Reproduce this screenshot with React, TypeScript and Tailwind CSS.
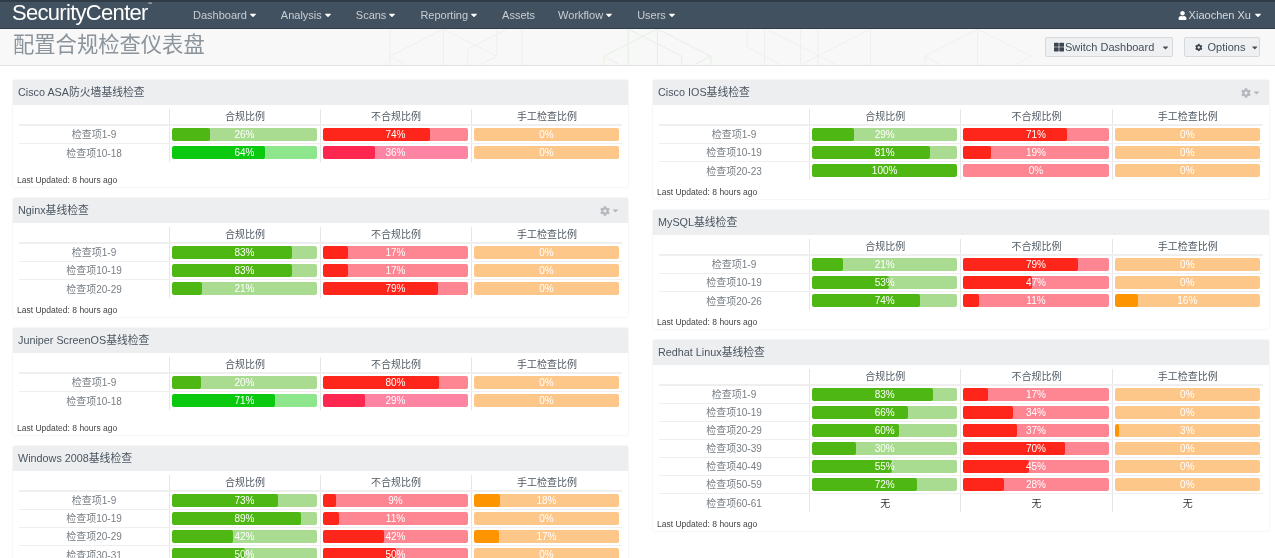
import { FaCaretDown, FaCog, FaThLarge, FaUser } from "react-icons/fa";

type Row = { label: string; values: [number, number, number] | null; alt?: boolean };

interface PanelData {
  title: string;
  gear?: boolean;
  rows: Row[];
}

const leftPanels: PanelData[] = [
  {
    title: "Cisco ASA防火墙基线检查",
    rows: [
      { label: "检查项1-9", values: [26, 74, 0] },
      { label: "检查项10-18", values: [64, 36, 0], alt: true },
    ],
  },
  {
    title: "Nginx基线检查",
    gear: true,
    rows: [
      { label: "检查项1-9", values: [83, 17, 0] },
      { label: "检查项10-19", values: [83, 17, 0] },
      { label: "检查项20-29", values: [21, 79, 0] },
    ],
  },
  {
    title: "Juniper ScreenOS基线检查",
    rows: [
      { label: "检查项1-9", values: [20, 80, 0] },
      { label: "检查项10-18", values: [71, 29, 0], alt: true },
    ],
  },
  {
    title: "Windows 2008基线检查",
    rows: [
      { label: "检查项1-9", values: [73, 9, 18] },
      { label: "检查项10-19", values: [89, 11, 0] },
      { label: "检查项20-29", values: [42, 42, 17] },
      { label: "检查项30-31", values: [50, 50, 0] },
    ],
  },
];

const rightPanels: PanelData[] = [
  {
    title: "Cisco IOS基线检查",
    gear: true,
    rows: [
      { label: "检查项1-9", values: [29, 71, 0] },
      { label: "检查项10-19", values: [81, 19, 0] },
      { label: "检查项20-23", values: [100, 0, 0] },
    ],
  },
  {
    title: "MySQL基线检查",
    rows: [
      { label: "检查项1-9", values: [21, 79, 0] },
      { label: "检查项10-19", values: [53, 47, 0] },
      { label: "检查项20-26", values: [74, 11, 16] },
    ],
  },
  {
    title: "Redhat Linux基线检查",
    rows: [
      { label: "检查项1-9", values: [83, 17, 0] },
      { label: "检查项10-19", values: [66, 34, 0] },
      { label: "检查项20-29", values: [60, 37, 3] },
      { label: "检查项30-39", values: [30, 70, 0] },
      { label: "检查项40-49", values: [55, 45, 0] },
      { label: "检查项50-59", values: [72, 28, 0] },
      { label: "检查项60-61", values: null },
    ],
  },
];

const navItems = [
  { label: "Dashboard", caret: true },
  { label: "Analysis", caret: true },
  { label: "Scans", caret: true },
  { label: "Reporting", caret: true },
  { label: "Assets", caret: false },
  { label: "Workflow", caret: true },
  { label: "Users", caret: true },
];

const barColors = {
  green: { track: "bg-[#a9dc90]", fill: "bg-[#4fb713]" },
  brightGreen: { track: "bg-[#8de68c]", fill: "bg-[#0ac90f]" },
  red: { track: "bg-[#fe8692]", fill: "bg-[#fe251b]" },
  pink: { track: "bg-[#fd85a3]", fill: "bg-[#fd2750]" },
  orange: { track: "bg-[#fec78a]", fill: "bg-[#fe9500]" },
};

function Bar({ value, color }: { value: number; color: keyof typeof barColors }) {
  const c = barColors[color];
  return (
    <div className={`relative h-[13px] rounded-[2px] overflow-hidden ${c.track}`}>
      <div className={`h-full rounded-[2px] ${c.fill}`} style={{ width: `${value}%` }} />
      <div className="absolute inset-0 flex items-center justify-center text-[10px] leading-none text-white">
        {value}%
      </div>
    </div>
  );
}

function Panel({ panel }: { panel: PanelData }) {
  return (
    <div className="flex flex-col min-h-[107px] bg-white rounded-[2px] shadow-[0_0_2px_rgba(0,0,0,0.12)]">
      <div className="flex items-center justify-between h-[25px] pl-[5px] pr-[8px] bg-[#edeef0] text-[10.8px] text-[#4a5560]">
        <span>{panel.title}</span>
        {panel.gear && (
          <span className="flex items-center gap-[1px] text-[#b4b8bc]">
            <FaCog className="w-[10px] h-[10px]" />
            <FaCaretDown className="w-[9px] h-[9px]" />
          </span>
        )}
      </div>
      <div className="px-[6px] pt-[4px]">
        <div className="grid grid-cols-[150px_1fr_1fr_1fr] h-[17px] border-b-2 border-[#efefef] text-[10px] text-[#4f5963]">
          <div />
          <div className="flex items-center justify-center border-l border-[#e6e6e6]">合规比例</div>
          <div className="flex items-center justify-center border-l border-[#e6e6e6]">不合规比例</div>
          <div className="flex items-center justify-center border-l border-[#e6e6e6]">手工检查比例</div>
        </div>
        {panel.rows.map((row, i) => (
          <div
            key={row.label}
            className={`grid grid-cols-[150px_1fr_1fr_1fr] h-[18px] text-[10px] ${
              i < panel.rows.length - 1 ? "border-b border-[#efefef]" : ""
            }`}
          >
            <div className="flex items-center justify-center text-[#777d83]">{row.label}</div>
            {row.values ? (
              <>
                <div className="border-l border-[#e6e6e6] pl-[2px] pr-[3px] pt-[2px]">
                  <Bar value={row.values[0]} color={row.alt ? "brightGreen" : "green"} />
                </div>
                <div className="border-l border-[#e6e6e6] pl-[2px] pr-[3px] pt-[2px]">
                  <Bar value={row.values[1]} color={row.alt ? "pink" : "red"} />
                </div>
                <div className="border-l border-[#e6e6e6] pl-[2px] pr-[3px] pt-[2px]">
                  <Bar value={row.values[2]} color="orange" />
                </div>
              </>
            ) : (
              <>
                <div className="flex items-center justify-center border-l border-[#e6e6e6] text-[#333]">无</div>
                <div className="flex items-center justify-center border-l border-[#e6e6e6] text-[#333]">无</div>
                <div className="flex items-center justify-center border-l border-[#e6e6e6] text-[#333]">无</div>
              </>
            )}
          </div>
        ))}
      </div>
      <div className="mt-auto h-[19px] px-[4px] pt-[7px] text-[8.5px] leading-[10px] text-[#444]">
        Last Updated: 8 hours ago
      </div>
    </div>
  );
}

export default function App() {
  return (
    <div className="h-[558px] overflow-hidden bg-white blur-[0.4px] font-['Liberation_Sans','Noto_Sans_CJK_SC',sans-serif]">
      {/* Top nav */}
      <div className="flex items-center h-[29px] bg-[#42515f] border-t-2 border-b border-t-[#2f3b47] border-b-[#2f3b47]">
        <div className="w-[193px] pl-[12px] pb-[4px] text-[22px] leading-none tracking-[-0.7px] text-white">
          SecurityCenter<span className="align-top text-[4px] leading-none">™</span>
        </div>
        <div className="flex items-center gap-[23px] text-[11px] text-[#c8ced4]">
          {navItems.map((item) => (
            <span key={item.label} className="flex items-center gap-[1px]">
              {item.label}
              {item.caret && <FaCaretDown className="w-[10px] h-[10px] text-white" />}
            </span>
          ))}
        </div>
        <div className="ml-auto mr-[12px] flex items-center gap-[2px] text-[11px] text-[#d5dade]">
          <FaUser className="w-[9px] h-[9px] text-white" />
          <span>Xiaochen Xu</span>
          <FaCaretDown className="w-[10px] h-[10px] text-white" />
        </div>
      </div>

      {/* Title bar */}
      <div className="relative flex items-center justify-between h-[37px] pl-[13px] pr-[15px] bg-[#f8f8f8] border-b border-[#e2e2e2]">
        <svg className="absolute inset-0 w-full h-full" viewBox="0 0 1275 37" fill="none">
          <path
            d="M383 0V37 M383 28L438 0L493 28L477 36 M383 28L398 36 M438 0V37 M463 37V21L503 0 M493 0V28 M519 0V37"
            stroke="#efefef"
          />
          <path
            d="M603 37V28L658 0L713 28V37 M603 28L618 36 M628 0V37 M628 0L683 28V37 M658 0V37 M713 28L697 36"
            stroke="#e3f0df"
          />
          <path
            d="M750 0V18L783 36 M770 0L840 36 M768 0V37 M805 0V37 M823 0V37 M877 0V37 M877 0L807 36 M933 37V28L987 0L1042 28L1027 36 M933 28L947 36 M987 0V37"
            stroke="#efefef"
          />
        </svg>
        <h1 className="relative pb-[2px] text-[21.3px] leading-none font-normal text-[#8b939b]">配置合规检查仪表盘</h1>
        <div className="relative flex items-center gap-[11px] text-[11px] text-[#444f59]">
          <button className="flex items-center gap-[1px] h-[20px] w-[128px] pl-[8px] bg-[#eff0f2] border border-[#d6d9dc] rounded-[2px]">
            <FaThLarge className="w-[10px] h-[10px] text-[#3c4650]" />
            <span>Switch Dashboard</span>
            <FaCaretDown className="w-[9px] h-[9px] ml-[6px]" />
          </button>
          <button className="flex items-center gap-[5px] h-[20px] w-[76px] pl-[10px] bg-[#eff0f2] border border-[#d6d9dc] rounded-[2px]">
            <FaCog className="w-[9px] h-[9px] text-[#3c4650]" />
            <span>Options</span>
            <FaCaretDown className="w-[9px] h-[9px] ml-[1px]" />
          </button>
        </div>
      </div>

      {/* Dashboard columns */}
      <div className="flex gap-[25px] pl-[13px] pt-[14px]">
        <div className="flex flex-col gap-[11px] w-[615px]">
          {leftPanels.map((p) => (
            <Panel key={p.title} panel={p} />
          ))}
        </div>
        <div className="flex flex-col gap-[11px] w-[616px]">
          {rightPanels.map((p) => (
            <Panel key={p.title} panel={p} />
          ))}
        </div>
      </div>
    </div>
  );
}
